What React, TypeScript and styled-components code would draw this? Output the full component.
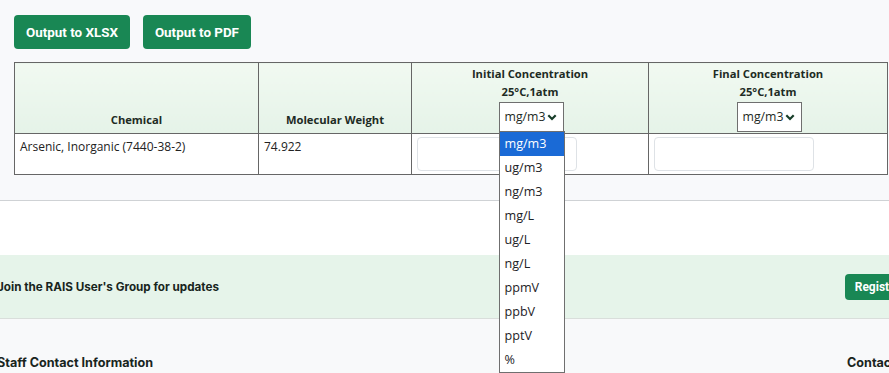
import React from "react";
import styled, { createGlobalStyle } from "styled-components";

const GlobalStyle = createGlobalStyle`
  html, body {
    margin: 0;
    padding: 0;
    overflow: hidden;
    background: #ffffff;
  }
  body {
    font-family: "Open Sans", "Noto Sans", sans-serif;
    color: #212529;
  }
`;

const units = ["mg/m3", "ug/m3", "ng/m3", "mg/L", "ug/L", "ng/L", "ppmV", "ppbV", "pptV", "%"];

const ToolSection = styled.section`
  background: #f8f9fb;
  padding: 15px 2px 25px 14px;
  border-bottom: 1px solid #cfd2d5;
`;

const ButtonRow = styled.div`
  display: flex;
  gap: 13px;
  margin-bottom: 13px;
`;

const GreenButton = styled.button<{ $small?: boolean }>`
  background: #198754;
  color: #fff;
  border: none;
  border-radius: 4px;
  font-family: Roboto, "Liberation Sans", sans-serif;
  font-weight: 700;
  font-size: ${(p) => (p.$small ? "12px" : "13.4px")};
  height: ${(p) => (p.$small ? "26px" : "34px")};
  padding: ${(p) => (p.$small ? "0 10px" : "0 12px")};
  white-space: nowrap;
  flex-shrink: 0;
`;

const Table = styled.table`
  width: 873px;
  table-layout: fixed;
  border-collapse: collapse;
  font-size: 12px;
  background: #fff;
`;

const HeadCell = styled.th`
  height: 71px;
  box-sizing: border-box;
  border: 1px solid #666;
  background: linear-gradient(#f1f9f1, #e5f3e8);
  vertical-align: bottom;
  text-align: center;
  font-weight: 700;
  font-size: 11.2px;
  color: #1d2b24;
  padding: 2px 6px 1px;
  line-height: 18px;
`;

const HeadLabel = styled.div`
  padding-bottom: 3px;
`;

const Cell = styled.td`
  border: 1px solid #666;
  vertical-align: top;
  padding: 3px 5px 3px;
  height: 34px;
  color: #222;
  line-height: 18px;
`;

const CellText = styled.div`
  padding-top: 1px;
`;

const SelectWrap = styled.div`
  position: relative;
  width: 65px;
  margin: 1px auto 0;
  left: 1px;
`;

const SelectBox = styled.div`
  display: flex;
  align-items: center;
  justify-content: space-between;
  width: 65px;
  height: 30px;
  box-sizing: border-box;
  border: 1px solid #6f6f6f;
  background: #fff;
  padding: 0 6px 0 5px;
  font-weight: 400;
  font-size: 12.3px;
  color: #1d2b24;
`;

const DropList = styled.ul`
  position: absolute;
  left: 0;
  top: 29px;
  width: 66px;
  margin: 0;
  padding: 0;
  list-style: none;
  background: #fff;
  border: 1px solid #6f6f6f;
  box-sizing: border-box;
  text-align: left;
  z-index: 10;
`;

const DropItem = styled.li<{ $active?: boolean }>`
  height: 24px;
  line-height: 24px;
  padding-left: 5px;
  font-weight: 400;
  font-size: 12.6px;
  background: ${(p) => (p.$active ? "#1a6ad6" : "transparent")};
  color: ${(p) => (p.$active ? "#fff" : "#1d2226")};
`;

const TextInput = styled.input`
  display: block;
  width: 160px;
  height: 34px;
  box-sizing: border-box;
  border: 1px solid #dee2e6;
  border-radius: 4px;
  background: #fff;
`;

const Spacer = styled.div`
  height: 54px;
  background: #fff;
`;

const Band = styled.div<{ $green?: boolean }>`
  background: ${(p) => (p.$green ? "#e6f4ea" : "#f8f9fa")};
  border-bottom: ${(p) => (p.$green ? "1px solid #d9dedb" : "none")};
  height: ${(p) => (p.$green ? "64px" : "60px")};
  display: flex;
  align-items: ${(p) => (p.$green ? "center" : "flex-start")};
  justify-content: space-between;
  width: 913px;
  margin-left: -3px;
  padding-top: ${(p) => (p.$green ? "0" : "36px")};
  box-sizing: border-box;
`;

const BandText = styled.span<{ $big?: boolean; $w?: number }>`
  font-family: Inter, "Liberation Sans", sans-serif;
  font-weight: 700;
  font-size: ${(p) => (p.$big ? "12.6px" : "11.7px")};
  width: ${(p) => (p.$w ? `${p.$w}px` : "auto")};
  color: #18251d;
  white-space: nowrap;
`;

const Chevron = () => (
  <svg width="10" height="7" viewBox="0 0 10 7" style={{ flexShrink: 0 }}>
    <polyline points="1.3,1.3 5,5 8.7,1.3" fill="none" stroke="#173d28" strokeWidth="2.2" />
  </svg>
);

const UnitSelect = ({ open }: { open?: boolean }) => (
  <SelectWrap>
    <SelectBox>
      mg/m3
      <Chevron />
    </SelectBox>
    {open && (
      <DropList>
        {units.map((u, i) => (
          <DropItem key={u} $active={i === 0}>
            {u}
          </DropItem>
        ))}
      </DropList>
    )}
  </SelectWrap>
);

export default function App() {
  return (
    <>
      <GlobalStyle />
      <ToolSection>
        <ButtonRow>
          <GreenButton>Output to XLSX</GreenButton>
          <GreenButton>Output to PDF</GreenButton>
        </ButtonRow>
        <Table>
          <colgroup>
            <col style={{ width: 244 }} />
            <col style={{ width: 153 }} />
            <col style={{ width: 237 }} />
            <col style={{ width: 239 }} />
          </colgroup>
          <thead>
            <tr>
              <HeadCell>
                <HeadLabel>Chemical</HeadLabel>
              </HeadCell>
              <HeadCell>
                <HeadLabel>Molecular Weight</HeadLabel>
              </HeadCell>
              <HeadCell>
                <div>Initial Concentration</div>
                <div>25°C,1atm</div>
                <UnitSelect open />
              </HeadCell>
              <HeadCell>
                <div>Final Concentration</div>
                <div>25°C,1atm</div>
                <UnitSelect />
              </HeadCell>
            </tr>
          </thead>
          <tbody>
            <tr>
              <Cell>
                <CellText>Arsenic, Inorganic (7440-38-2)</CellText>
              </Cell>
              <Cell>
                <CellText>74.922</CellText>
              </Cell>
              <Cell>
                <TextInput />
              </Cell>
              <Cell>
                <TextInput />
              </Cell>
            </tr>
          </tbody>
        </Table>
      </ToolSection>
      <Spacer />
      <Band $green>
        <BandText>Join the RAIS User's Group for updates</BandText>
        <GreenButton $small>Register</GreenButton>
      </Band>
      <Band>
        <BandText $big>Staff Contact Information</BandText>
        <BandText $big $w={63}>Contact</BandText>
      </Band>
    </>
  );
}
